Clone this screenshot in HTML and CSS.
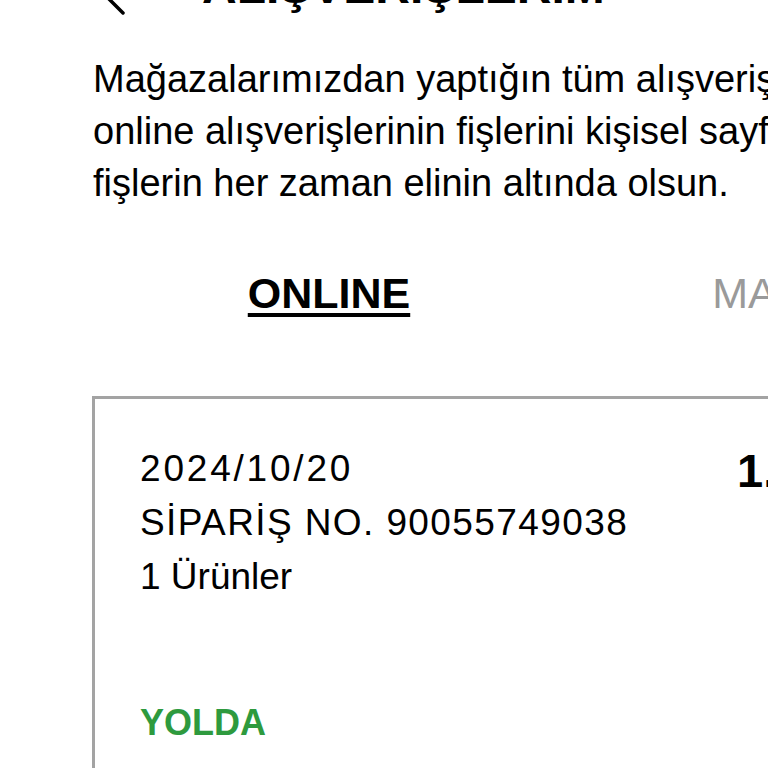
FILE: index.html
```html
<!DOCTYPE html>
<html lang="tr">
<head>
    <meta charset="UTF-8">
    <meta name="viewport" content="width=device-width, initial-scale=1.0">
    <title>Alışverişlerim</title>
    <link rel="stylesheet" href="styles.css">
</head>
<body>
    <div class="page">
        <div class="topbar">
            <svg class="back" width="20" height="32" viewBox="0 0 20 32">
                <path d="M17 2 L3 16 L17 30" fill="none" stroke="#000" stroke-width="3.5" stroke-linecap="round" stroke-linejoin="round"/>
            </svg>
            <h1>ALIŞVERİŞLERİM</h1>
        </div>

        <p class="intro">
            Mağazalarımızdan yaptığın tüm alışverişlerin ve<br>
            online alışverişlerinin fişlerini kişisel sayfanda,<br>
            fişlerin her zaman elinin altında olsun.
        </p>

        <div class="tabs">
            <div class="tab active">ONLINE</div>
            <div class="tab">MAĞAZA</div>
        </div>

        <div class="order-card">
            <div class="order-info">
                <p class="date">2024/10/20</p>
                <p class="order-no">SİPARİŞ NO. 90055749038</p>
                <p>1 Ürünler</p>
                <p class="status">YOLDA</p>
            </div>
            <div class="price">1.299,95 TL</div>
        </div>
    </div>
</body>
</html>
```

FILE: styles.css
```css
body {
    font-family: "Liberation Sans", Arial, sans-serif;
    margin: 0;
    padding: 0;
    background-color: #fff;
    color: #000;
    overflow: hidden;
    height: 768px;
}
.page {
    padding-left: 92px;
    white-space: nowrap;
}
.topbar {
    display: flex;
    align-items: flex-start;
    height: 52px;
    margin-top: -39px;
}
.back {
    margin-top: 22px;
    margin-left: 14px;
    flex-shrink: 0;
}
.topbar h1 {
    margin: 0 0 0 76px;
    font-size: 48px;
    line-height: 52px;
    font-weight: bold;
}
.intro {
    margin: 40px 0 0 1px;
    font-size: 38px;
    line-height: 52px;
}
.tabs {
    display: grid;
    grid-template-columns: 474px 474px;
    margin-top: 59px;
}
.tab {
    text-align: center;
    font-size: 43px;
    line-height: 50px;
    color: #9a9a9a;
}
.tab.active {
    color: #000;
    font-weight: bold;
    text-decoration: underline;
    text-decoration-thickness: 4px;
    text-underline-offset: 5px;
}
.order-card {
    display: flex;
    width: 900px;
    margin-top: 78px;
    padding: 43px 0 40px 45px;
    border: 3px solid #a3a3a3;
}
.order-info {
    flex: 0 0 597px;
}
.order-info p {
    margin: 0;
    font-size: 37px;
    line-height: 54px;
}
.order-info .date {
    letter-spacing: 2.8px;
}
.order-info .order-no {
    letter-spacing: 1.4px;
}
.order-info .status {
    margin-top: 97px;
    font-size: 36px;
    line-height: 44px;
    font-weight: bold;
    color: #2e9a3e;
    letter-spacing: 0;
}
.price {
    margin-top: 2px;
    font-size: 47px;
    line-height: 54px;
    font-weight: bold;
}
```
